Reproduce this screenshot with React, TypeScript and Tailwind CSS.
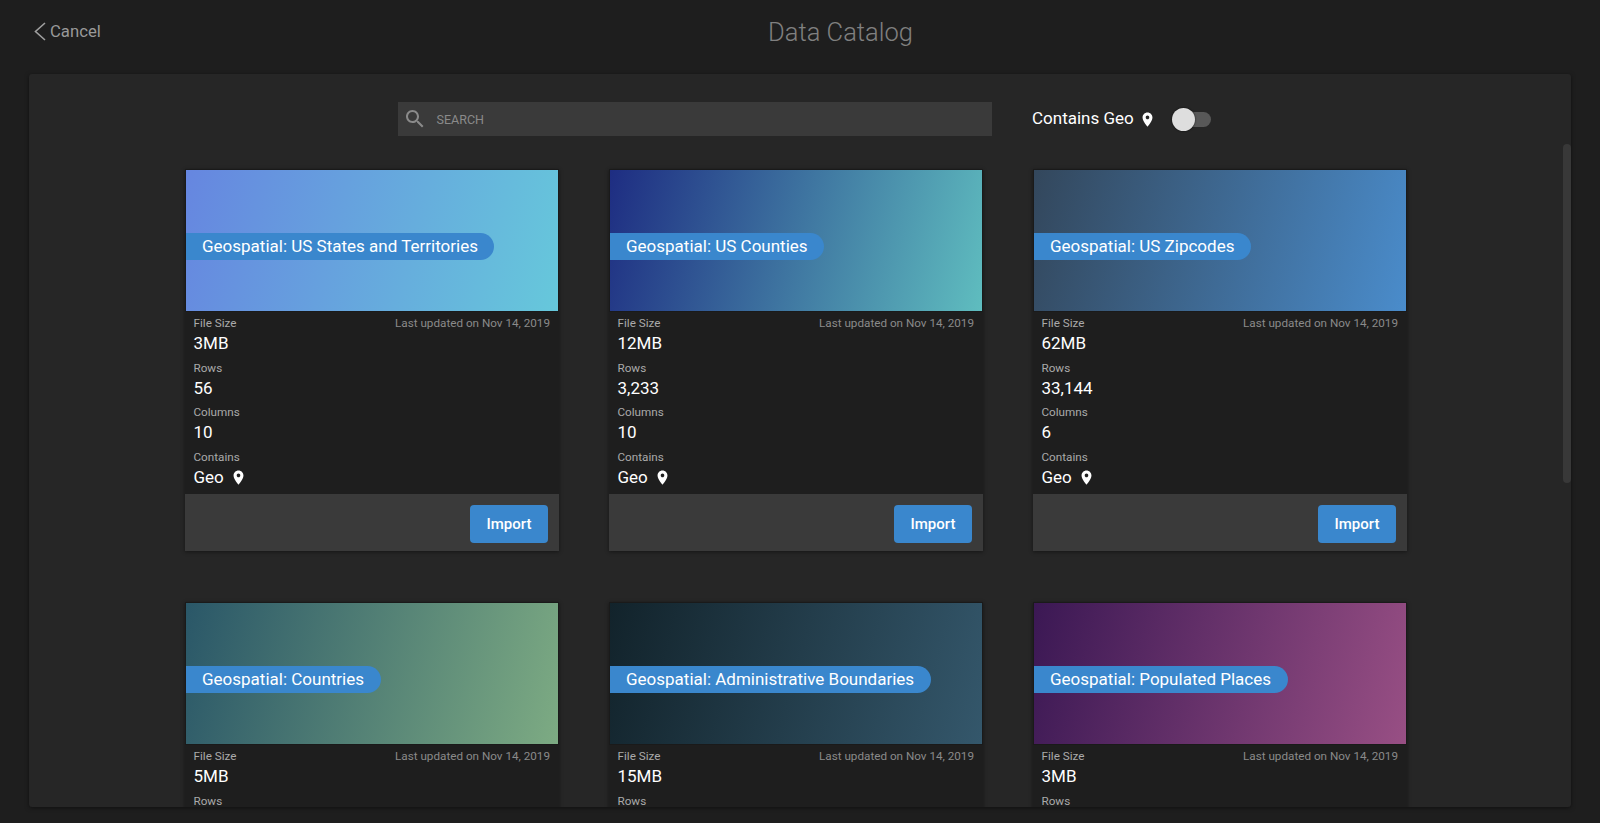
const PIN_PATH =
  "M12 2C8.13 2 5 5.13 5 9c0 5.25 7 13 7 13s7-7.75 7-13c0-3.87-3.13-7-7-7zm0 9.5c-1.38 0-2.5-1.12-2.5-2.5s1.12-2.5 2.5-2.5 2.5 1.12 2.5 2.5-1.12 2.5-2.5 2.5z";

interface Dataset {
  title: string;
  size: string;
  // rows and columns are left out for cards that run off the bottom of the panel
  rows?: string;
  columns?: string;
  gradient: string;
}

const datasets: Dataset[] = [
  {
    title: "Geospatial: US States and Territories",
    size: "3MB",
    rows: "56",
    columns: "10",
    gradient: "bg-[linear-gradient(105deg,#6686e0,#66c8db)]",
  },
  {
    title: "Geospatial: US Counties",
    size: "12MB",
    rows: "3,233",
    columns: "10",
    gradient: "bg-[linear-gradient(105deg,#1e2d82,#5fbdbf)]",
  },
  {
    title: "Geospatial: US Zipcodes",
    size: "62MB",
    rows: "33,144",
    columns: "6",
    gradient: "bg-[linear-gradient(105deg,#33475c,#4a8ccb)]",
  },
  {
    title: "Geospatial: Countries",
    size: "5MB",
    gradient: "bg-[linear-gradient(105deg,#2a5768,#7dab83)]",
  },
  {
    title: "Geospatial: Administrative Boundaries",
    size: "15MB",
    gradient: "bg-[linear-gradient(105deg,#12232b,#34576b)]",
  },
  {
    title: "Geospatial: Populated Places",
    size: "3MB",
    gradient: "bg-[linear-gradient(105deg,#3b1854,#984f84)]",
  },
];

const PinIcon = () => (
  <svg width="17" height="17" viewBox="0 0 24 24" fill="#fff" className="shrink-0">
    <path fillRule="evenodd" d={PIN_PATH} />
  </svg>
);

const Stat = ({ label, children }: { label: string; children?: React.ReactNode }) => (
  <div className="flex flex-col">
    <span className="h-5 text-[11.7px] leading-5 text-[#aaaaaa]">{label}</span>
    {children && (
      <span className="-mt-[2px] mb-[2px] flex h-[24.7px] items-center gap-[6px] text-[17px] leading-[24.7px] text-white">
        {children}
      </span>
    )}
  </div>
);

const DatasetCard = ({ dataset }: { dataset: Dataset }) => (
  <div className="flex h-[382px] flex-col bg-[#1e1e1e] shadow-[0_1px_4px_rgba(0,0,0,0.45)]">
    <div className={`flex h-[143px] shrink-0 items-center border border-[#1a1a1a] ${dataset.gradient}`}>
      <div className="mt-3 flex h-[27px] items-center rounded-r-full bg-[#3a87cd] pr-[16.5px] pl-4 text-[17px] text-white">
        {dataset.title}
      </div>
    </div>
    <div className="relative flex h-[182px] flex-col pt-px pr-[9px] pl-[8.5px]">
      <span className="absolute top-px right-[9px] h-5 text-[11.7px] leading-5 text-[#8a8a8a]">
        Last updated on Nov 14, 2019
      </span>
      <Stat label="File Size">{dataset.size}</Stat>
      <Stat label="Rows">{dataset.rows}</Stat>
      {dataset.columns && (
        <>
          <Stat label="Columns">{dataset.columns}</Stat>
          <Stat label="Contains">
            Geo
            <PinIcon />
          </Stat>
        </>
      )}
    </div>
    {dataset.columns && (
      <div className="flex h-[57px] shrink-0 items-center justify-end bg-[#3a3a3a] pt-[2px] pr-[11px]">
        <button className="h-[38px] w-[78px] rounded bg-[#3a87cd] pt-[2px] text-[15px] font-medium text-white">
          Import
        </button>
      </div>
    )}
  </div>
);

export default function App() {
  return (
    <div className="flex h-[823px] w-[1600px] flex-col overflow-hidden bg-[#1e1e1e] font-['Roboto',sans-serif]">
      <header className="relative flex h-[74px] shrink-0 items-start justify-center pt-[16px] pl-[81px]">
        <div className="absolute top-[22px] left-[34px] flex items-center gap-[4px] text-[#999999]">
          <svg width="12" height="19" viewBox="0 0 12 19" fill="none" stroke="#a0a0a0" strokeWidth="1.6">
            <path d="M11 1L1.5 9.5L11 18" />
          </svg>
          <span className="text-[16.7px] leading-[19px]">Cancel</span>
        </div>
        <h1 className="text-[25.5px] leading-8 font-light text-[#808080]">Data Catalog</h1>
      </header>

      <main className="relative mx-[29px] mb-4 min-h-0 flex-1 overflow-hidden rounded-[3px] bg-[#262626] shadow-[0_1px_4px_rgba(0,0,0,0.5)]">
        <div className="mt-7 flex h-[34px] items-center pl-[368.5px]">
          <div className="flex h-[34px] w-[594px] items-center bg-[#3a3a3a] pl-[5px]">
            <svg width="24" height="24" viewBox="0 0 24 24" fill="#8a8a8a">
              <path d="M15.5 14h-.79l-.28-.27C15.41 12.59 16 11.11 16 9.5 16 5.91 13.09 3 9.5 3S3 5.91 3 9.5 5.91 16 9.5 16c1.61 0 3.09-.59 4.23-1.57l.27.28v.79l5 4.99L20.49 19l-4.99-5zm-6 0C7.01 14 5 11.99 5 9.5S7.01 5 9.5 5 14 7.01 14 9.5 11.99 14 9.5 14z" />
            </svg>
            <span className="mt-[2px] ml-[10px] text-[12.5px] text-[#8a8a8a]">SEARCH</span>
          </div>
          <span className="ml-[40.5px] text-[17px] whitespace-nowrap text-white">Contains Geo</span>
          <span className="ml-[5px] flex">
            <PinIcon />
          </span>
          <div className="relative ml-[18px] h-[15px] w-[37px] rounded-full bg-[#585858]">
            <div className="absolute top-[-4px] left-[-2px] size-[23px] rounded-full bg-[#dedede] shadow-[0_0_2px_rgba(0,0,0,0.8)]" />
          </div>
        </div>

        <div className="mt-[33px] grid w-fit grid-cols-[repeat(3,374px)] gap-x-[50px] gap-y-[51px] pl-[156px]">
          {datasets.map((dataset) => (
            <DatasetCard key={dataset.title} dataset={dataset} />
          ))}
        </div>

        <div className="absolute top-[70px] right-0 h-[339px] w-2 rounded-full bg-[#383838]" />
      </main>
    </div>
  );
}
